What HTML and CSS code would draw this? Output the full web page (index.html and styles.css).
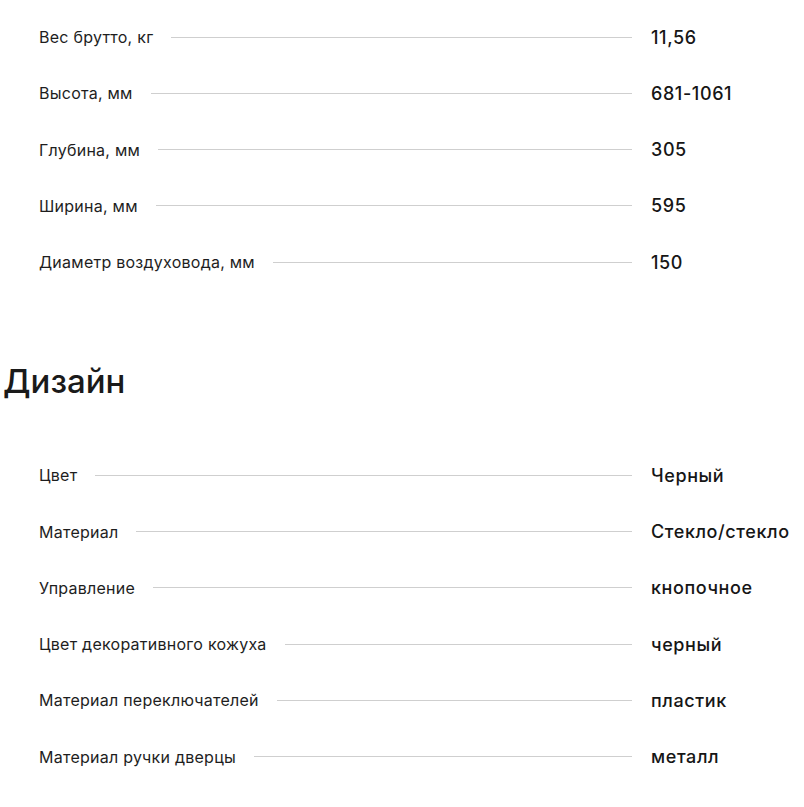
FILE: index.html
```html
<!DOCTYPE html>
<html lang="ru">
<head>
<meta charset="utf-8">
<link rel="stylesheet" href="styles.css">
</head>
<body>
<div class="page">
  <ul class="specs specs--first">
    <li class="spec"><span class="spec__label">Вес брутто, кг</span><span class="spec__line"></span><span class="spec__value">11,56</span></li>
    <li class="spec"><span class="spec__label">Высота, мм</span><span class="spec__line"></span><span class="spec__value">681-1061</span></li>
    <li class="spec"><span class="spec__label">Глубина, мм</span><span class="spec__line"></span><span class="spec__value">305</span></li>
    <li class="spec"><span class="spec__label">Ширина, мм</span><span class="spec__line"></span><span class="spec__value">595</span></li>
    <li class="spec"><span class="spec__label">Диаметр воздуховода, мм</span><span class="spec__line"></span><span class="spec__value">150</span></li>
  </ul>
  <h2 class="section-title">Дизайн</h2>
  <ul class="specs">
    <li class="spec"><span class="spec__label">Цвет</span><span class="spec__line"></span><span class="spec__value">Черный</span></li>
    <li class="spec"><span class="spec__label">Материал</span><span class="spec__line"></span><span class="spec__value">Стекло/стекло</span></li>
    <li class="spec"><span class="spec__label">Управление</span><span class="spec__line"></span><span class="spec__value">кнопочное</span></li>
    <li class="spec"><span class="spec__label">Цвет декоративного кожуха</span><span class="spec__line"></span><span class="spec__value">черный</span></li>
    <li class="spec"><span class="spec__label">Материал переключателей</span><span class="spec__line"></span><span class="spec__value">пластик</span></li>
    <li class="spec"><span class="spec__label">Материал ручки дверцы</span><span class="spec__line"></span><span class="spec__value">металл</span></li>
  </ul>
</div>
</body>
</html>
```
FILE: styles.css
```css
html, body {
  margin: 0;
  padding: 0;
  background: #fff;
}
body {
  font-family: Inter, "Noto Sans", sans-serif;
  color: #1c1c1c;
  overflow: hidden;
}
.page {
  padding-left: 3px;
}
.specs {
  list-style: none;
  margin: 0;
  padding: 0 0 0 36px;
}
.specs--first {
  padding-top: 9px;
}
.spec {
  display: flex;
  align-items: center;
  height: 56.25px;
}
.spec__label {
  font-size: 16px;
  letter-spacing: 0.25px;
  color: #1e1e1e;
  white-space: nowrap;
}
.spec__line {
  flex: 1;
  height: 1px;
  background: #cfcfcf;
  margin: 0 19px 0 18px;
}
.spec__value {
  width: 153px;
  flex: none;
  font-size: 18px;
  letter-spacing: 0.6px;
  font-weight: 500;
  color: #161616;
  white-space: nowrap;
}
.section-title {
  margin: 71px 0 46px;
  font-size: 33px;
  line-height: 40px;
  font-weight: 500;
  color: #1a1a1a;
}
```
